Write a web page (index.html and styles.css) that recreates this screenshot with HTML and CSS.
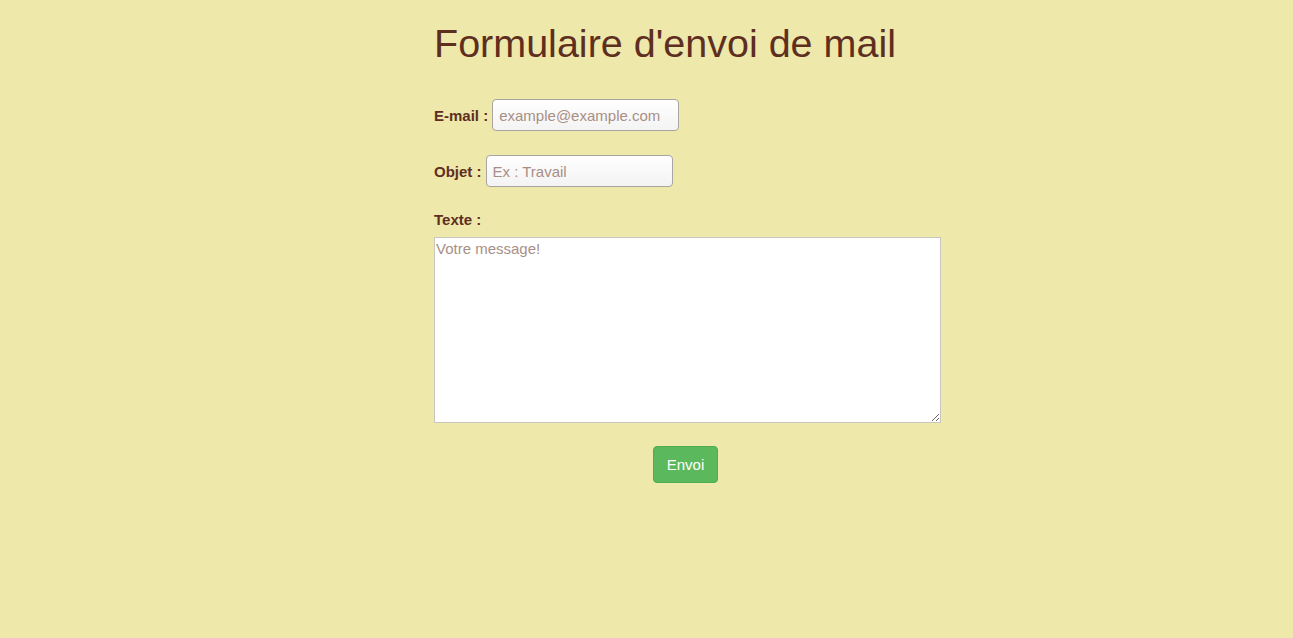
FILE: index.html
```html
<!DOCTYPE html>
<html lang="fr">
<head>
<meta charset="utf-8">
<title>Formulaire d'envoi de mail</title>
<link rel="stylesheet" href="styles.css">
</head>
<body>
<main class="page">
  <h1 class="title">Formulaire d'envoi de mail</h1>
  <form class="form">
    <p class="row"><label class="label" for="email">E-mail :</label> <input class="field" id="email" type="email" placeholder="example@example.com"></p>
    <p class="row"><label class="label" for="objet">Objet :</label> <input class="field" id="objet" type="text" placeholder="Ex : Travail"></p>
    <p class="row-text"><label class="label" for="texte">Texte :</label></p>
    <textarea class="message" id="texte" placeholder="Votre message!"></textarea>
    <div class="actions"><button class="btn" type="submit">Envoi</button></div>
  </form>
</main>
</body>
</html>
```

FILE: styles.css
```css
html, body {
  margin: 0;
  padding: 0;
  background: #eee8aa;
}
body {
  font-family: "Liberation Sans", Arial, sans-serif;
  color: #5e2e1f;
}
.page {
  width: 507px;
  margin-left: 434px;
  padding-top: 20px;
}
.title {
  margin: 0;
  font-size: 39.5px;
  font-weight: normal;
  line-height: 46px;
  color: #5e2e1f;
}
.form {
  margin: 33px 0 0;
}
.row {
  margin: 0 0 24px;
  height: 32px;
  display: flex;
  align-items: center;
}
.row .label {
  margin-right: 4px;
}
.label {
  font-size: 15px;
  font-weight: bold;
  color: #5e2e1f;
}
.field {
  box-sizing: border-box;
  width: 187px;
  height: 32px;
  margin: 0;
  padding: 4px 6px;
  border: 1px solid #aaa5a0;
  border-radius: 4px;
  background: linear-gradient(#ffffff, #f3f3f3);
  font-family: "Liberation Sans", Arial, sans-serif;
  font-size: 15px;
  color: #5e2e1f;
}
.field::placeholder,
.message::placeholder {
  color: #a88f86;
  opacity: 1;
}
.row-text {
  margin: 0 0 8px;
  line-height: 18px;
}
.message {
  display: block;
  box-sizing: border-box;
  width: 507px;
  height: 186px;
  margin: 0;
  padding: 2px 1px;
  border: 1px solid #c9c6c0;
  border-radius: 0;
  background: #ffffff;
  font-family: "Liberation Sans", Arial, sans-serif;
  font-size: 15px;
  line-height: 18px;
  color: #5e2e1f;
}
.actions {
  display: flex;
  justify-content: center;
  padding-top: 23px;
  padding-right: 4px;
}
.btn {
  box-sizing: border-box;
  height: 37px;
  padding: 0 13px;
  border: 1px solid #4cae4c;
  border-radius: 4px;
  background: #5cb85c;
  color: #ffffff;
  font-family: "Liberation Sans", Arial, sans-serif;
  font-size: 15px;
  line-height: 35px;
}
```
